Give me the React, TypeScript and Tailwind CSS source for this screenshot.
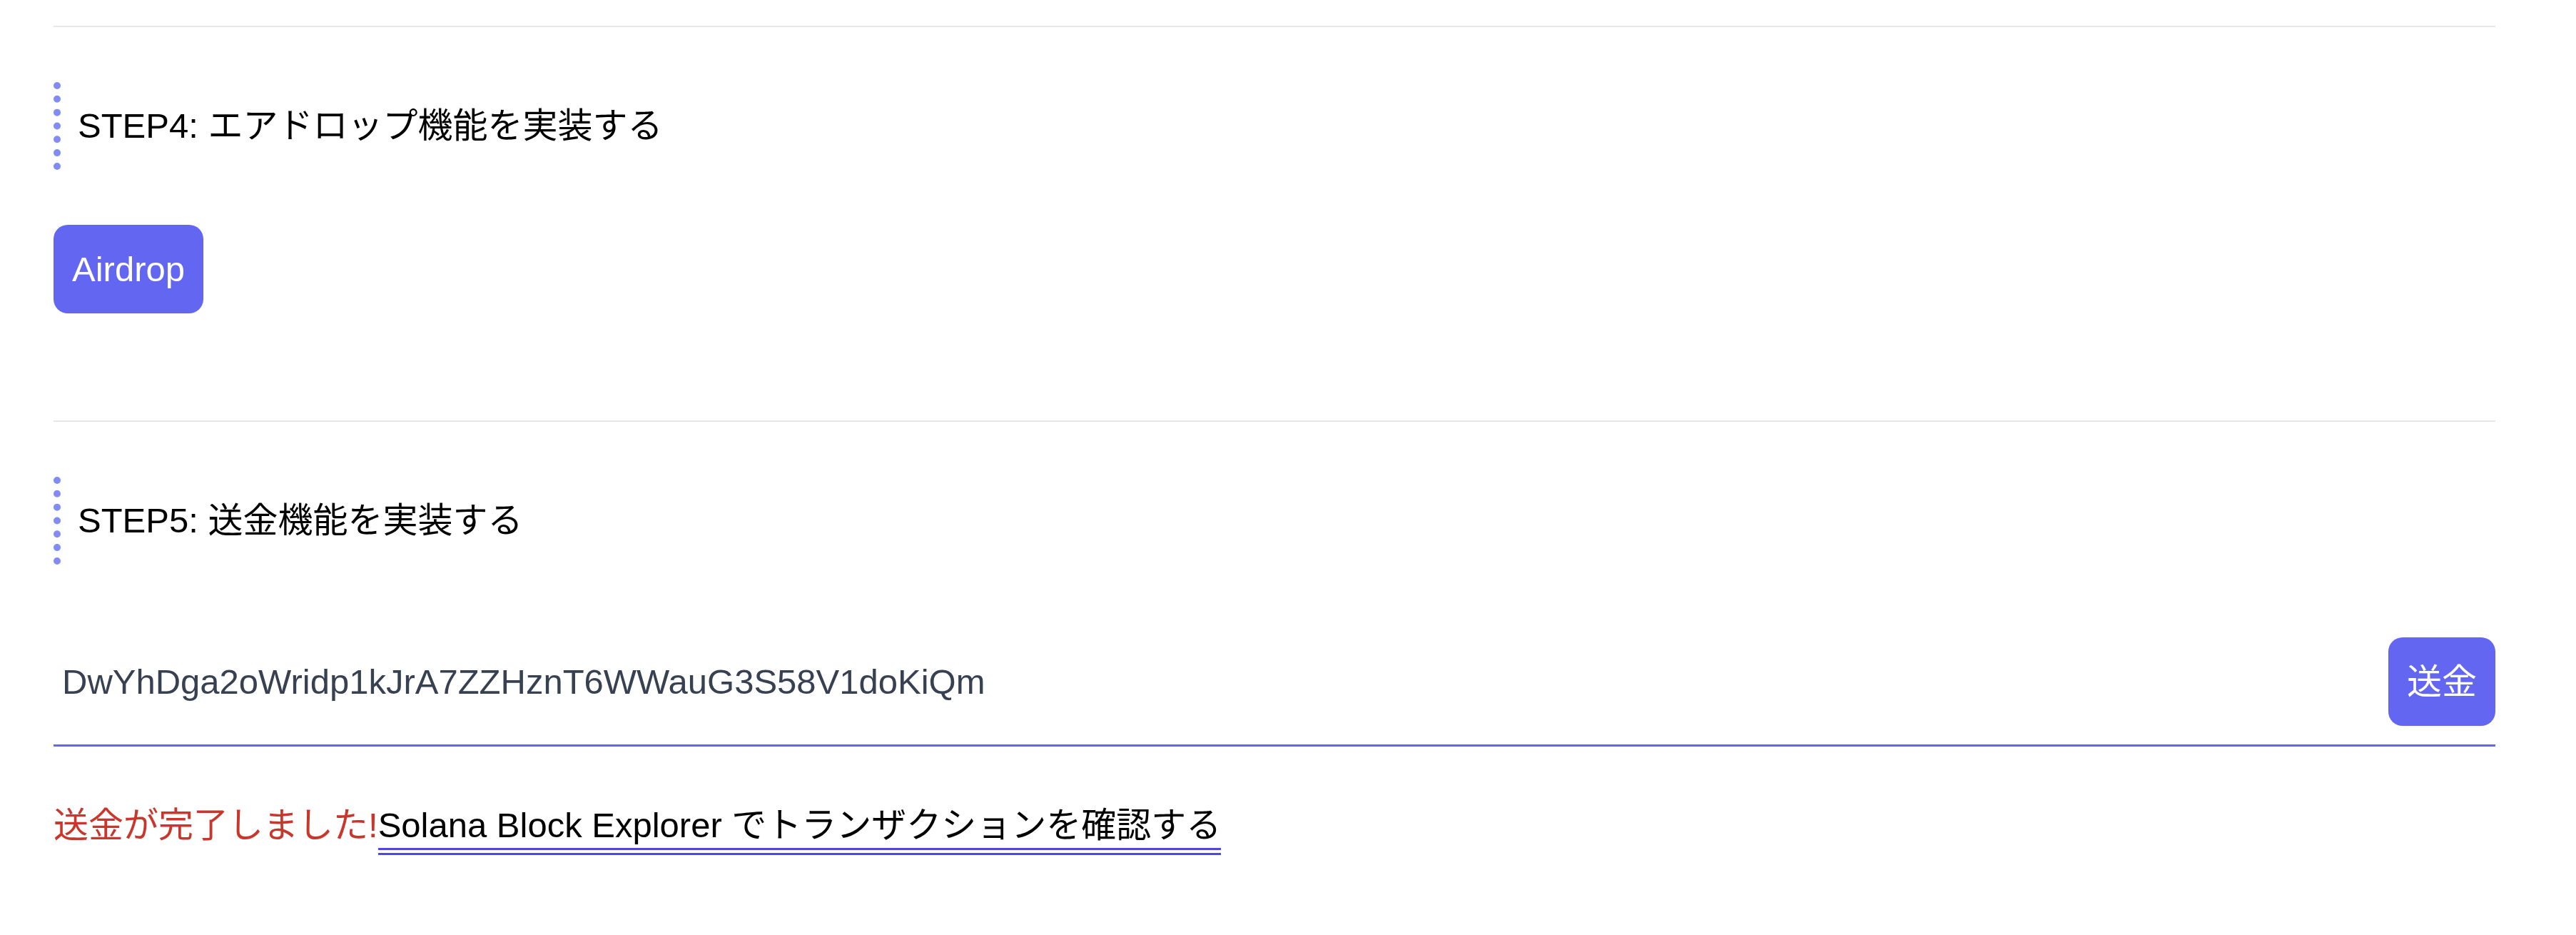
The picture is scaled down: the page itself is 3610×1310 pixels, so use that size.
import React from 'react';

const font = 'font-["Liberation_Sans","Noto_Sans_CJK_JP",sans-serif]';

interface StepHeaderProps {
  title: string;
}

const StepHeader: React.FC<StepHeaderProps> = ({ title }) => (
  <h2 className="border-l-[10px] border-dotted border-[#818cf8] py-[25px] pl-[24px] text-[49px] leading-[73px] font-normal text-black">
    {title}
  </h2>
);

const App: React.FC = () => {
  const address = 'DwYhDga2oWridp1kJrA7ZZHznT6WWauG3S58V1doKiQm';

  return (
    <div className={`${font} min-h-[1310px] bg-white pl-[75px] pr-[113px] pt-[36px]`}>
      {/* STEP4: Airdrop */}
      <section className="border-t-2 border-[#e5e7eb] pb-[150px]">
        <div className="mt-[77px]">
          <StepHeader title="STEP4: エアドロップ機能を実装する" />
        </div>
        <button
          type="button"
          className="mt-[77px] rounded-[20px] bg-[#6366f1] px-[26px] py-[26px] text-[49px] leading-[72px] text-white"
        >
          Airdrop
        </button>
      </section>

      {/* STEP5: Send */}
      <section className="border-t-2 border-[#e5e7eb]">
        <div className="mt-[77px]">
          <StepHeader title="STEP5: 送金機能を実装する" />
        </div>

        <form
          className="mt-[76px] flex items-center border-b-[3px] border-[#6366f1] py-[26px]"
          onSubmit={(e) => e.preventDefault()}
        >
          <input
            type="text"
            defaultValue={address}
            className="flex-1 bg-transparent pl-[12px] text-[49px] leading-[72px] text-[#374151] outline-none"
          />
          <button
            type="submit"
            className="rounded-[20px] bg-[#6366f1] px-[26px] py-[26px] text-[49px] leading-[72px] text-white"
          >
            送金
          </button>
        </form>

        <p className="mt-[74px] text-[49px] leading-[72px]">
          <span className="text-[#c9372c]">送金が完了しました!</span>
          <a
            href="#"
            className="border-b-[10px] border-double border-[#4f46e5] pb-[5px] text-black"
          >
            Solana Block Explorer でトランザクションを確認する
          </a>
        </p>
      </section>
    </div>
  );
};

export default App;
